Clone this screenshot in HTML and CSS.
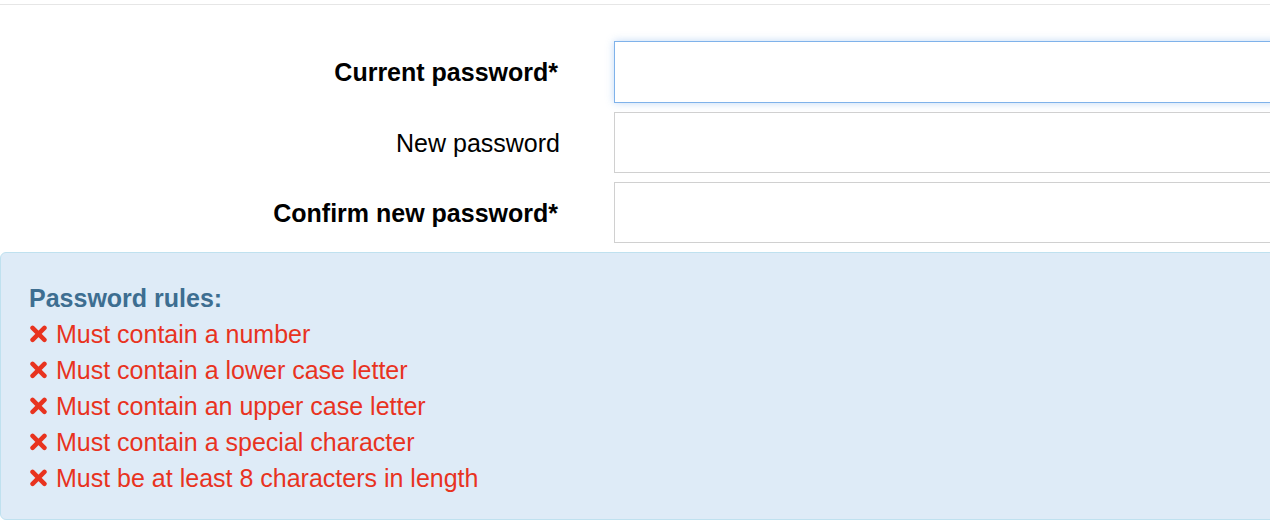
FILE: index.html
```html
<!DOCTYPE html>
<html>
<head>
<meta charset="utf-8">
<link rel="stylesheet" href="styles.css">
</head>
<body>
<div class="topline"></div>
<form class="form">
  <div class="row">
    <label class="label bold">Current password*</label>
    <input class="field focus" type="password">
  </div>
  <div class="row">
    <label class="label">New password</label>
    <input class="field" type="password">
  </div>
  <div class="row">
    <label class="label bold">Confirm new password*</label>
    <input class="field" type="password">
  </div>
</form>
<div class="alert">
  <div class="title">Password rules:</div>
  <ul class="rules">
    <li><svg class="x" viewBox="0 0 16 16"><path d="M3 2.5 L13 12.5 M13 2.5 L3 12.5"/></svg>Must contain a number</li>
    <li><svg class="x" viewBox="0 0 16 16"><path d="M3 2.5 L13 12.5 M13 2.5 L3 12.5"/></svg>Must contain a lower case letter</li>
    <li><svg class="x" viewBox="0 0 16 16"><path d="M3 2.5 L13 12.5 M13 2.5 L3 12.5"/></svg>Must contain an upper case letter</li>
    <li><svg class="x" viewBox="0 0 16 16"><path d="M3 2.5 L13 12.5 M13 2.5 L3 12.5"/></svg>Must contain a special character</li>
    <li><svg class="x" viewBox="0 0 16 16"><path d="M3 2.5 L13 12.5 M13 2.5 L3 12.5"/></svg>Must be at least 8 characters in length</li>
  </ul>
</div>
</body>
</html>
```
FILE: styles.css
```css
html, body {
  margin: 0;
  padding: 0;
  overflow: hidden;
  background: #ffffff;
  font-family: "Liberation Sans", Arial, sans-serif;
  font-size: 25px;
  line-height: 36px;
  color: #000;
}
.topline {
  height: 4px;
  border-bottom: 1px solid #e6e6e6;
}
.form {
  display: flex;
  flex-direction: column;
  gap: 9px;
  padding-top: 36px;
  padding-bottom: 9px;
}
.row {
  display: grid;
  grid-template-columns: 560px 700px;
  column-gap: 54px;
  align-items: center;
}
.label {
  text-align: right;
  font-weight: normal;
}
.label.bold {
  font-weight: bold;
  padding-right: 2px;
}
.field {
  box-sizing: border-box;
  height: 61px;
  width: 700px;
  margin: 0;
  border: 1px solid #d0d0d0;
  background: #fff;
  outline: none;
  font: inherit;
}
.field.focus {
  height: 62px;
  border-color: #7fb2ea;
  box-shadow: 0 0 8px rgba(120, 170, 235, 0.45);
}
.alert {
  box-sizing: border-box;
  width: 1300px;
  margin: 0;
  border: 1px solid #bfe1ef;
  border-radius: 6px;
  background: #deebf7;
  padding: 27px 28px 23px 28px;
}
.title {
  font-weight: bold;
  color: #3d6e91;
}
.rules {
  list-style: none;
  margin: 0;
  padding: 0;
  color: #e8331f;
}
.rules li {
  display: flex;
  align-items: center;
}
.x {
  width: 19px;
  height: 19px;
  margin-left: 0;
  margin-right: 8px;
  fill: none;
  stroke: #e8331f;
  stroke-width: 3.8;
  stroke-linecap: round;
}
```
